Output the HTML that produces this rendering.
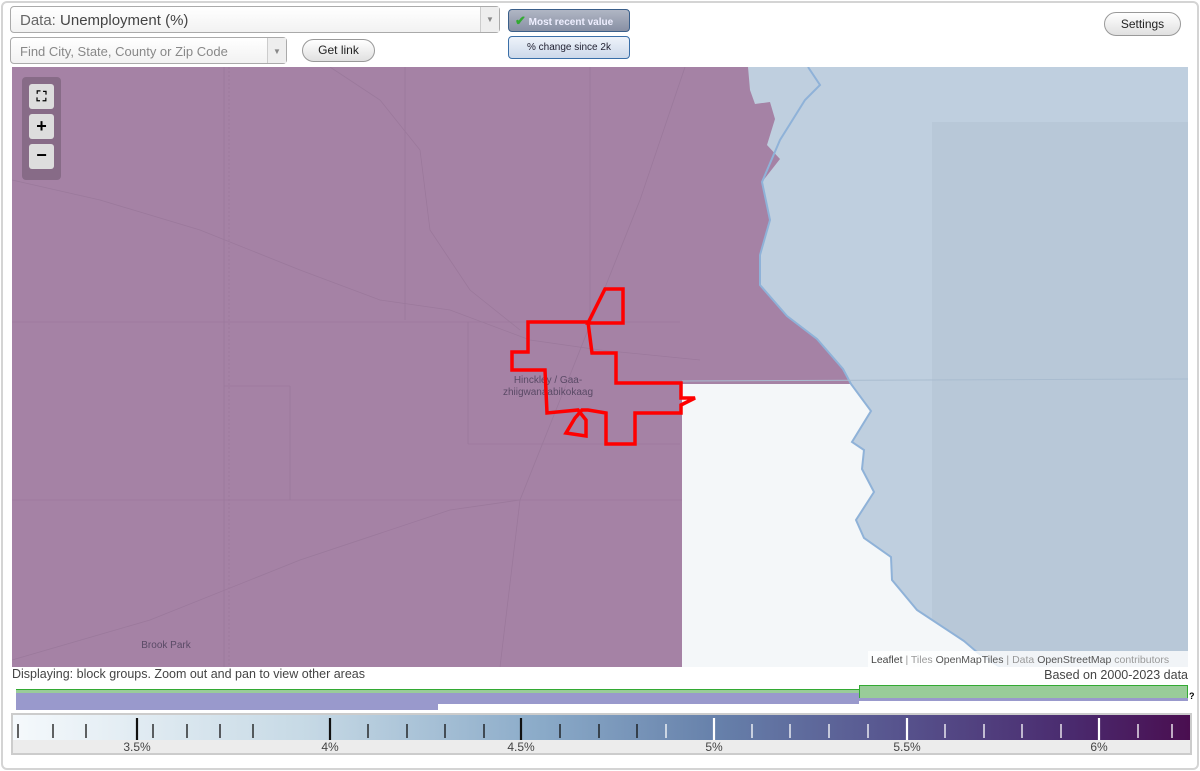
<!DOCTYPE html>
<html><head><meta charset="utf-8"><style>
*{box-sizing:border-box;margin:0;padding:0}
body{width:1200px;height:771px;background:#fff;font-family:"Liberation Sans",sans-serif;position:relative;overflow:hidden}
.frame{position:absolute;left:1px;top:1px;width:1198px;height:769px;border:2px solid #d4d4d4;border-radius:6px}
.sel{position:absolute;background:linear-gradient(#fff,#f2f2f2);border:1px solid #aaa;border-radius:4px;color:#444}
.sel .arr{position:absolute;right:0;top:0;bottom:0;width:19px;border-left:1px solid #ccc;background:#eee;color:#888;font-size:8px;text-align:center}
.btn{position:absolute;border:1px solid #999;border-radius:12px;background:linear-gradient(#fff,#e0e0e0);font-size:12px;text-align:center;color:#222}
.abs{position:absolute}
</style></head><body>
<div class="frame"></div>
<div class="sel" style="left:10px;top:6px;width:490px;height:27px;font-size:15px;padding:5px 0 0 9px"><span style="color:#666">Data:</span> Unemployment (%)<div class="arr" style="padding-top:8px">▼</div></div>
<div class="sel" style="left:10px;top:37px;width:277px;height:27px;font-size:13px;padding:6px 0 0 9px;color:#888">Find City, State, County or Zip Code<div class="arr" style="padding-top:9px">▼</div></div>
<div class="btn" style="left:302px;top:39px;width:73px;height:23px;line-height:21px">Get link</div>
<div class="abs" style="left:508px;top:9px;width:122px;height:23px;border:1px solid #3a5f8a;border-radius:4px;background:linear-gradient(#b0b6c4,#8890a4);color:#eef;font-size:10px;font-weight:bold;line-height:21px;padding-left:6px"><span style="color:#3a3;font-size:13px">✔</span> Most recent value</div>
<div class="abs" style="left:508px;top:36px;width:122px;height:23px;border:1px solid #3a6fa8;border-radius:4px;background:linear-gradient(#eef3fa,#cdd9ea);color:#223;font-size:10px;line-height:21px;text-align:center">% change since 2k</div>
<div class="btn" style="left:1104px;top:12px;width:77px;height:24px;line-height:22px">Settings</div>

<svg class="abs" style="left:12px;top:67px" width="1176" height="600" viewBox="12 67 1176 600">
<rect x="12" y="67" width="1176" height="600" fill="#bfcfdf"/>
<rect x="932" y="122" width="256" height="545" fill="#b8c8d8"/>
<polygon fill="#f4f7f9" points="682,384 851,384 871,411 852,442 864,450 862,469 874,492 856,520 864,538 891,557 892,580 917,610 964,641 978,653 1000,667 682,667"/>
<polygon fill="#a582a5" points="12,67 748,67 750,90 755,104 770,102 775,119 767,145 780,159 762,182 770,220 760,255 760,285 787,316 817,339 843,369 851,384 682,384 682,667 12,667"/>
<polyline fill="none" stroke="#8fb2d8" stroke-width="2" points="808,67 820,85 805,100 780,140 762,182 770,220 760,255 760,285 787,316 817,339 843,369 851,384 871,411 852,442 864,450 862,469 874,492 856,520 864,538 891,557 892,580 917,610 964,641 978,653 1000,667"/>
<line x1="682" y1="381" x2="1188" y2="379" stroke="#a9bccf" stroke-width="1"/>
<g stroke="#8f6e90" stroke-width="0.8" fill="none" opacity="0.45">
<line x1="224" y1="67" x2="224" y2="667"/><line x1="229" y1="67" x2="229" y2="667" stroke-dasharray="2 2"/>
<line x1="12" y1="322" x2="680" y2="322"/><line x1="468" y1="322" x2="468" y2="444"/><line x1="468" y1="444" x2="680" y2="444"/>
<line x1="12" y1="500" x2="682" y2="500"/><line x1="224" y1="386" x2="290" y2="386"/><line x1="290" y1="386" x2="290" y2="500"/>
<line x1="405" y1="67" x2="405" y2="320"/><line x1="590" y1="67" x2="590" y2="320"/>
<polyline points="12,180 100,200 200,230 300,270 380,300 450,310 530,340 600,350 650,355 700,360"/>
<polyline points="330,67 380,100 420,150 430,230 470,290 520,330"/>
<polyline points="685,67 640,200 600,300 560,400 520,500 500,667"/>
<polyline points="12,660 150,620 300,560 450,510 520,500"/>
</g>
<text x="548" y="383" font-size="10" fill="#5a4a66" text-anchor="middle" font-family="Liberation Sans,sans-serif">Hinckley / Gaa-</text>
<text x="548" y="395" font-size="10" fill="#5a4a66" text-anchor="middle" font-family="Liberation Sans,sans-serif">zhiigwanaabikokaag</text>
<text x="166" y="648" font-size="10" fill="#5a4a66" text-anchor="middle" font-family="Liberation Sans,sans-serif">Brook Park</text>
<g fill="none" stroke="#f00" stroke-width="3.5" stroke-linejoin="miter">
<polygon points="605,289 623,289 623,323 588,323"/>
<polygon points="528,322 588,322 592,353 616,353 616,383 681,383 681,398 695,398 681,405 681,413 635,413 635,444 606,444 606,413 588,410 582,410 575,418 566,433 586,436 586,420 578,410 547,413 545,370 512,370 512,352 528,352"/>
</g>
<rect x="868" y="651" width="320" height="16" fill="#fff" opacity="0.8"/>
<text x="871" y="663" font-size="10.5" fill="#999" font-family="Liberation Sans,sans-serif"><tspan fill="#444">Leaflet</tspan> | Tiles <tspan fill="#555">OpenMapTiles</tspan> | Data <tspan fill="#555">OpenStreetMap</tspan> contributors</text>
</svg>
<div class="abs" style="left:22px;top:77px;width:39px;height:103px;background:rgba(100,80,100,.45);border-radius:4px"></div>
<div class="abs" style="left:29px;top:84px;width:25px;height:25px;background:#ddd;border-radius:3px;font-size:14px;text-align:center;line-height:25px;font-weight:bold">⛶</div>
<div class="abs" style="left:29px;top:114px;width:25px;height:25px;background:#ddd;border-radius:3px;font-size:18px;text-align:center;line-height:24px;font-weight:bold">+</div>
<div class="abs" style="left:29px;top:144px;width:25px;height:25px;background:#ddd;border-radius:3px;font-size:18px;text-align:center;line-height:23px;font-weight:bold">−</div>

<div class="abs" style="left:12px;top:667px;font-size:12.5px;color:#444">Displaying: block groups. Zoom out and pan to view other areas</div>
<div class="abs" style="right:12px;top:668px;font-size:12.5px;color:#444">Based on 2000-2023 data</div>
<div class="abs" style="left:16px;top:689px;width:843px;height:4px;background:#99cc99;border-top:1px solid #3a3"></div>
<div class="abs" style="left:859px;top:685px;width:329px;height:13px;background:#99cc99;border:1px solid #3a3;border-bottom:none"></div>
<div class="abs" style="left:16px;top:693px;width:422px;height:17px;background:#9999cc"></div>
<div class="abs" style="left:438px;top:693px;width:421px;height:11px;background:#9999cc"></div>
<div class="abs" style="left:859px;top:698px;width:329px;height:3px;background:#9999cc"></div>
<div class="abs" style="left:1189px;top:691px;font-size:9px;font-weight:bold">?</div>
<div class="abs" style="left:11px;top:713px;width:1181px;height:42px;border:2px solid #ccc;background:#ececec"></div>
<div class="abs" style="left:13px;top:715px;width:1177px;height:25px;background:linear-gradient(90deg,#f5f9fc,#c6d9e5 25%,#8aaac8 45%,#6680aa 60%,#57548e 75%,#4a2a6e 90%,#4a0e50)"></div>
<svg class="abs" style="left:0;top:714px" width="1200" height="40">
<g font-family="Liberation Sans,sans-serif" font-size="12" fill="#444" text-anchor="middle">
<text x="137" y="37">3.5%</text><text x="330" y="37">4%</text><text x="521" y="37">4.5%</text><text x="714" y="37">5%</text><text x="907" y="37">5.5%</text><text x="1099" y="37">6%</text></g>
<g stroke-width="1.3">
<line x1="18" y1="10" x2="18" y2="24" stroke="#111"/><line x1="53" y1="10" x2="53" y2="24" stroke="#111"/><line x1="86" y1="10" x2="86" y2="24" stroke="#111"/>
<line x1="137" y1="4" x2="137" y2="26" stroke="#111" stroke-width="2.2"/>
<line x1="153" y1="10" x2="153" y2="24" stroke="#111"/><line x1="187" y1="10" x2="187" y2="24" stroke="#111"/><line x1="220" y1="10" x2="220" y2="24" stroke="#111"/><line x1="253" y1="10" x2="253" y2="24" stroke="#111"/>
<line x1="330" y1="4" x2="330" y2="26" stroke="#111" stroke-width="2.2"/>
<line x1="368" y1="10" x2="368" y2="24" stroke="#111"/><line x1="407" y1="10" x2="407" y2="24" stroke="#111"/><line x1="445" y1="10" x2="445" y2="24" stroke="#111"/><line x1="484" y1="10" x2="484" y2="24" stroke="#111"/>
<line x1="521" y1="4" x2="521" y2="26" stroke="#111" stroke-width="2.2"/>
<line x1="560" y1="10" x2="560" y2="24" stroke="#111"/><line x1="599" y1="10" x2="599" y2="24" stroke="#111"/><line x1="637" y1="10" x2="637" y2="24" stroke="#111"/><line x1="666" y1="10" x2="666" y2="24" stroke="#fff"/>
<line x1="714" y1="4" x2="714" y2="26" stroke="#fff" stroke-width="2.2"/>
<line x1="752" y1="10" x2="752" y2="24" stroke="#fff"/><line x1="790" y1="10" x2="790" y2="24" stroke="#fff"/><line x1="829" y1="10" x2="829" y2="24" stroke="#fff"/><line x1="868" y1="10" x2="868" y2="24" stroke="#fff"/>
<line x1="907" y1="4" x2="907" y2="26" stroke="#fff" stroke-width="2.2"/>
<line x1="945" y1="10" x2="945" y2="24" stroke="#fff"/><line x1="984" y1="10" x2="984" y2="24" stroke="#fff"/><line x1="1022" y1="10" x2="1022" y2="24" stroke="#fff"/><line x1="1061" y1="10" x2="1061" y2="24" stroke="#fff"/>
<line x1="1099" y1="4" x2="1099" y2="26" stroke="#fff" stroke-width="2.2"/>
<line x1="1138" y1="10" x2="1138" y2="24" stroke="#fff"/><line x1="1172" y1="10" x2="1172" y2="24" stroke="#fff"/>
</g>
</svg>
</body></html>
